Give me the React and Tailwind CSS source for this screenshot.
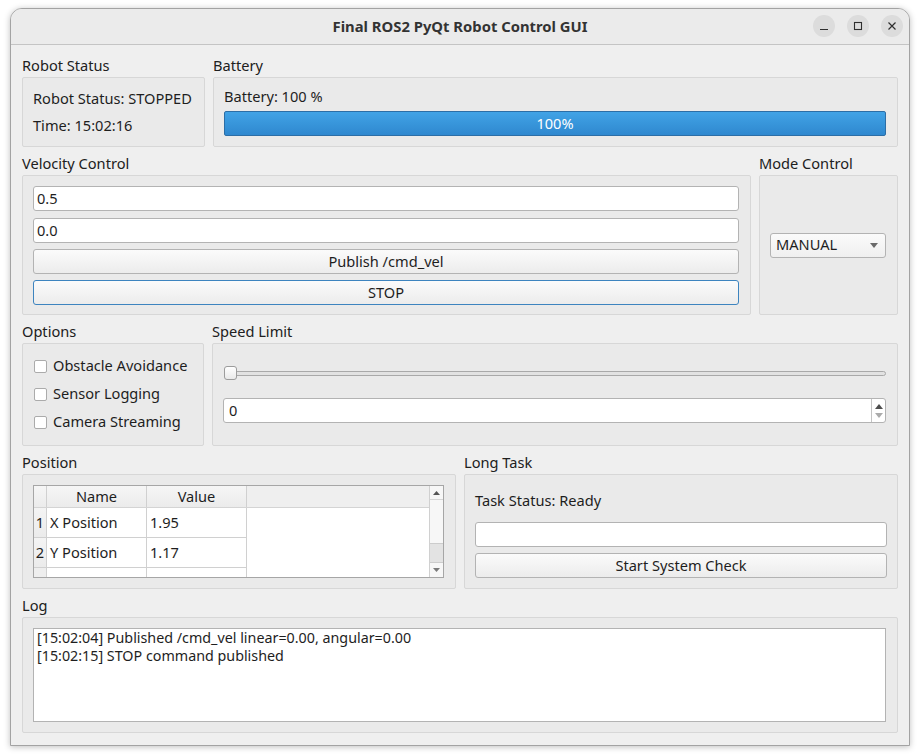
import React from 'react';

const FONT = { fontFamily: '"Noto Sans", "Open Sans", sans-serif' };

function Group({ title, className = '', boxClass = '', children }) {
  return (
    <div className={`flex flex-col ${className}`}>
      <div className="h-[18px] leading-[16px] mb-[2px] text-[14.6px] text-[#202020] whitespace-nowrap">{title}</div>
      <div className={`border border-[#d7d7d7] bg-[#eaeaea] rounded-[2px] ${boxClass}`}>{children}</div>
    </div>
  );
}

function LineEdit({ value, className = '' }) {
  return (
    <div className={`h-[25px] bg-white border border-[#b3b3b3] rounded-[3px] px-[3px] flex items-center text-[14.6px] text-[#1e1e1e] ${className}`}>
      {value}
    </div>
  );
}

function Button({ label, focused, className = '' }) {
  return (
    <div
      className={`h-[25px] rounded-[3px] border bg-gradient-to-b from-[#fbfbfb] to-[#ececec] flex items-center justify-center text-[14.6px] text-[#1e1e1e] ${
        focused ? 'border-[#3d84bf]' : 'border-[#b3b3b3]'
      } ${className}`}
    >
      {label}
    </div>
  );
}

function CheckRow({ label }) {
  return (
    <div className="h-[20px] flex items-center gap-[6px]">
      <div className="w-[13px] h-[13px] bg-white border border-[#ababab] rounded-[2px]" />
      <span className="text-[14.6px] text-[#1e1e1e] whitespace-nowrap">{label}</span>
    </div>
  );
}

function TitleBar() {
  return (
    <div className="h-[36px] border-b border-[#c4c4c4] bg-[#ebebeb] relative flex items-center justify-center">
      <span className="font-bold text-[14.8px] text-[#333333]">Final ROS2 PyQt Robot Control GUI</span>
      <div className="absolute right-[6px] top-[6px] flex gap-[12px]">
        <div className="w-[22px] h-[22px] rounded-full bg-[#dcdcdc] flex items-center justify-center">
          <svg width="10" height="10" viewBox="0 0 10 10"><path d="M1 8.5h8" stroke="#2e2e2e" strokeWidth="1.2" /></svg>
        </div>
        <div className="w-[22px] h-[22px] rounded-full bg-[#dcdcdc] flex items-center justify-center">
          <svg width="10" height="10" viewBox="0 0 10 10"><rect x="1.5" y="1.5" width="7" height="7" fill="none" stroke="#2e2e2e" strokeWidth="1.1" /></svg>
        </div>
        <div className="w-[22px] h-[22px] rounded-full bg-[#dcdcdc] flex items-center justify-center">
          <svg width="10" height="10" viewBox="0 0 10 10"><path d="M1.5 1.5l7 7M8.5 1.5l-7 7" stroke="#2e2e2e" strokeWidth="1.2" /></svg>
        </div>
      </div>
    </div>
  );
}

function PositionTable() {
  const rows = [
    ['1', 'X Position', '1.95'],
    ['2', 'Y Position', '1.17'],
  ];
  return (
    <div className="h-[93px] border border-[#a6a6a6] bg-white flex overflow-hidden">
      <div className="flex-1 flex flex-col">
        {/* header */}
        <div className="h-[22px] flex bg-[#efefef] border-b border-[#d4d4d4] shrink-0">
          <div className="w-[13px] bg-gradient-to-b from-[#f6f6f6] to-[#ebebeb] border-r border-[#d0d0d0]" />
          <div className="w-[100px] bg-gradient-to-b from-[#f6f6f6] to-[#ebebeb] border-r border-[#d0d0d0] flex items-center justify-center text-[14.6px] text-[#1e1e1e]">Name</div>
          <div className="w-[100px] bg-gradient-to-b from-[#f6f6f6] to-[#ebebeb] border-r border-[#d0d0d0] flex items-center justify-center text-[14.6px] text-[#1e1e1e]">Value</div>
          <div className="flex-1 bg-[#efefef]" />
        </div>
        {rows.map(([n, name, val]) => (
          <div key={n} className="h-[30px] flex shrink-0">
            <div className="w-[13px] bg-gradient-to-b from-[#f4f4f4] to-[#ebebeb] border-r border-b border-[#d0d0d0] flex items-center justify-center text-[14.6px] text-[#1e1e1e]">{n}</div>
            <div className="w-[100px] border-r border-b border-[#d0d0d0] flex items-center pl-[3px] text-[14.6px] text-[#1e1e1e] whitespace-nowrap">{name}</div>
            <div className="w-[100px] border-r border-b border-[#d0d0d0] flex items-center pl-[3px] text-[14.6px] text-[#1e1e1e]">{val}</div>
          </div>
        ))}
        <div className="flex-1 flex">
          <div className="w-[13px] bg-[#eeeeee] border-r border-[#d0d0d0]" />
          <div className="w-[100px] border-r border-[#d0d0d0]" />
          <div className="w-[100px] border-r border-[#d0d0d0]" />
        </div>
      </div>
      {/* scrollbar */}
      <div className="w-[14px] border-l border-[#d0d0d0] bg-[#f7f7f7] flex flex-col">
        <div className="h-[14px] border-b border-[#d6d6d6] flex items-center justify-center">
          <svg width="7" height="4" viewBox="0 0 7 4"><path d="M3.5 0L7 4H0z" fill="#555555" /></svg>
        </div>
        <div className="flex-1 flex flex-col justify-end">
          <div className="h-[20px] bg-[#e3e3e3] border-t border-b border-[#cccccc]" />
        </div>
        <div className="h-[14px] flex items-center justify-center">
          <svg width="7" height="4" viewBox="0 0 7 4"><path d="M0 0H7L3.5 4z" fill="#7a7a7a" /></svg>
        </div>
      </div>
    </div>
  );
}

export default function App() {
  return (
    <div className="w-[920px] h-[755px] bg-white pt-[8px] pl-[10px] overflow-hidden" style={FONT}>
      <div className="w-[900px] h-[738px] rounded-t-[12px] border border-[#a3a3a3] bg-[#efefef] shadow-[0_1px_6px_rgba(0,0,0,0.25)] overflow-hidden flex flex-col">
        <TitleBar />
        <div className="px-[11px] pt-[12px] flex flex-col">
          {/* Row 1 */}
          <div className="flex gap-[8px]">
            <Group title="Robot Status" className="w-[183px]" boxClass="h-[70px] px-[10px] pt-[11px]">
              <div className="h-[18px] leading-[18px] text-[14.6px] text-[#1e1e1e] whitespace-nowrap">Robot Status: STOPPED</div>
              <div className="h-[18px] leading-[18px] mt-[9px] text-[14.6px] text-[#1e1e1e]">Time: 15:02:16</div>
            </Group>
            <Group title="Battery" className="flex-1" boxClass="h-[70px] pl-[10px] pr-[11px] pt-[9px]">
              <div className="h-[18px] leading-[18px] text-[14.6px] text-[#1e1e1e]">Battery: 100 %</div>
              <div className="mt-[6px] h-[25px] rounded-[2px] border border-[#2c6ea6] bg-gradient-to-b from-[#41a3e6] to-[#2f88cf] flex items-center justify-center text-[14.6px] text-white">
                100%
              </div>
            </Group>
          </div>

          {/* Row 2 */}
          <div className="flex gap-[8px] mt-[8px]">
            <Group title="Velocity Control" className="flex-1" boxClass="h-[140px] pl-[10px] pr-[11px] pt-[10px]">
              <LineEdit value="0.5" />
              <LineEdit value="0.0" className="mt-[7px]" />
              <Button label="Publish /cmd_vel" className="mt-[6px]" />
              <Button label="STOP" focused className="mt-[6px]" />
            </Group>
            <Group title="Mode Control" className="w-[139px]" boxClass="h-[140px] pl-[10px] pr-[11px] flex items-center">
              <div className="w-full h-[25px] rounded-[3px] border border-[#b3b3b3] bg-gradient-to-b from-[#fbfbfb] to-[#efefef] flex items-center justify-between pl-[5px] pr-[7px] text-[14.6px] text-[#1e1e1e]">
                <span>MANUAL</span>
                <svg width="8" height="5" viewBox="0 0 8 5"><path d="M0 0H8L4 5z" fill="#6a6a6a" /></svg>
              </div>
            </Group>
          </div>

          {/* Row 3 */}
          <div className="flex gap-[8px] mt-[8px]">
            <Group title="Options" className="w-[182px]" boxClass="h-[103px] pl-[11px] pt-[12px] flex flex-col gap-[8px]">
              <CheckRow label="Obstacle Avoidance" />
              <CheckRow label="Sensor Logging" />
              <CheckRow label="Camera Streaming" />
            </Group>
            <Group title="Speed Limit" className="flex-1" boxClass="h-[103px] pl-[10px] pr-[11px]">
              <div className="mt-[22px] h-[14px] relative flex items-center pl-[1px]">
                <div className="w-full h-[5px] rounded-full border border-[#a9a9a9] bg-[#e2e2e2]" />
                <div className="absolute left-[1px] top-0 w-[13px] h-[14px] rounded-[3px] border border-[#9c9c9c] bg-gradient-to-b from-[#ffffff] to-[#e9e9e9]" />
              </div>
              <div className="mt-[18px] h-[25px] bg-white border border-[#b3b3b3] rounded-[3px] flex">
                <div className="flex-1 flex items-center pl-[5px] text-[14.6px] text-[#1e1e1e]">0</div>
                <div className="w-[14px] border-l border-[#c4c4c4] flex flex-col items-center justify-center gap-[4px]">
                  <svg width="8" height="5" viewBox="0 0 8 5"><path d="M4 0L8 5H0z" fill="#4d4d4d" /></svg>
                  <svg width="8" height="5" viewBox="0 0 8 5"><path d="M0 0H8L4 5z" fill="#ababab" /></svg>
                </div>
              </div>
            </Group>
          </div>

          {/* Row 4 */}
          <div className="flex gap-[8px] mt-[8px]">
            <Group title="Position" className="flex-1" boxClass="h-[115px] pl-[10px] pr-[11px] pt-[10px]">
              <PositionTable />
            </Group>
            <Group title="Long Task" className="flex-1" boxClass="h-[115px] pl-[10px] pr-[10px] pt-[16px]">
              <div className="h-[18px] leading-[18px] text-[14.6px] text-[#1e1e1e]">Task Status: Ready</div>
              <div className="mt-[13px] h-[25px] bg-white border border-[#b3b3b3] rounded-[3px]" />
              <Button label="Start System Check" className="mt-[6px]" />
            </Group>
          </div>

          {/* Row 5 */}
          <Group title="Log" className="mt-[8px]" boxClass="h-[116px] pl-[10px] pr-[11px] pt-[10px]">
            <div className="h-[94px] bg-white border border-[#b3b3b3] px-[3px] text-[14.3px] leading-[18px] text-[#1e1e1e]">
              <div>[15:02:04] Published /cmd_vel linear=0.00, angular=0.00</div>
              <div>[15:02:15] STOP command published</div>
            </div>
          </Group>
        </div>
      </div>
    </div>
  );
}
